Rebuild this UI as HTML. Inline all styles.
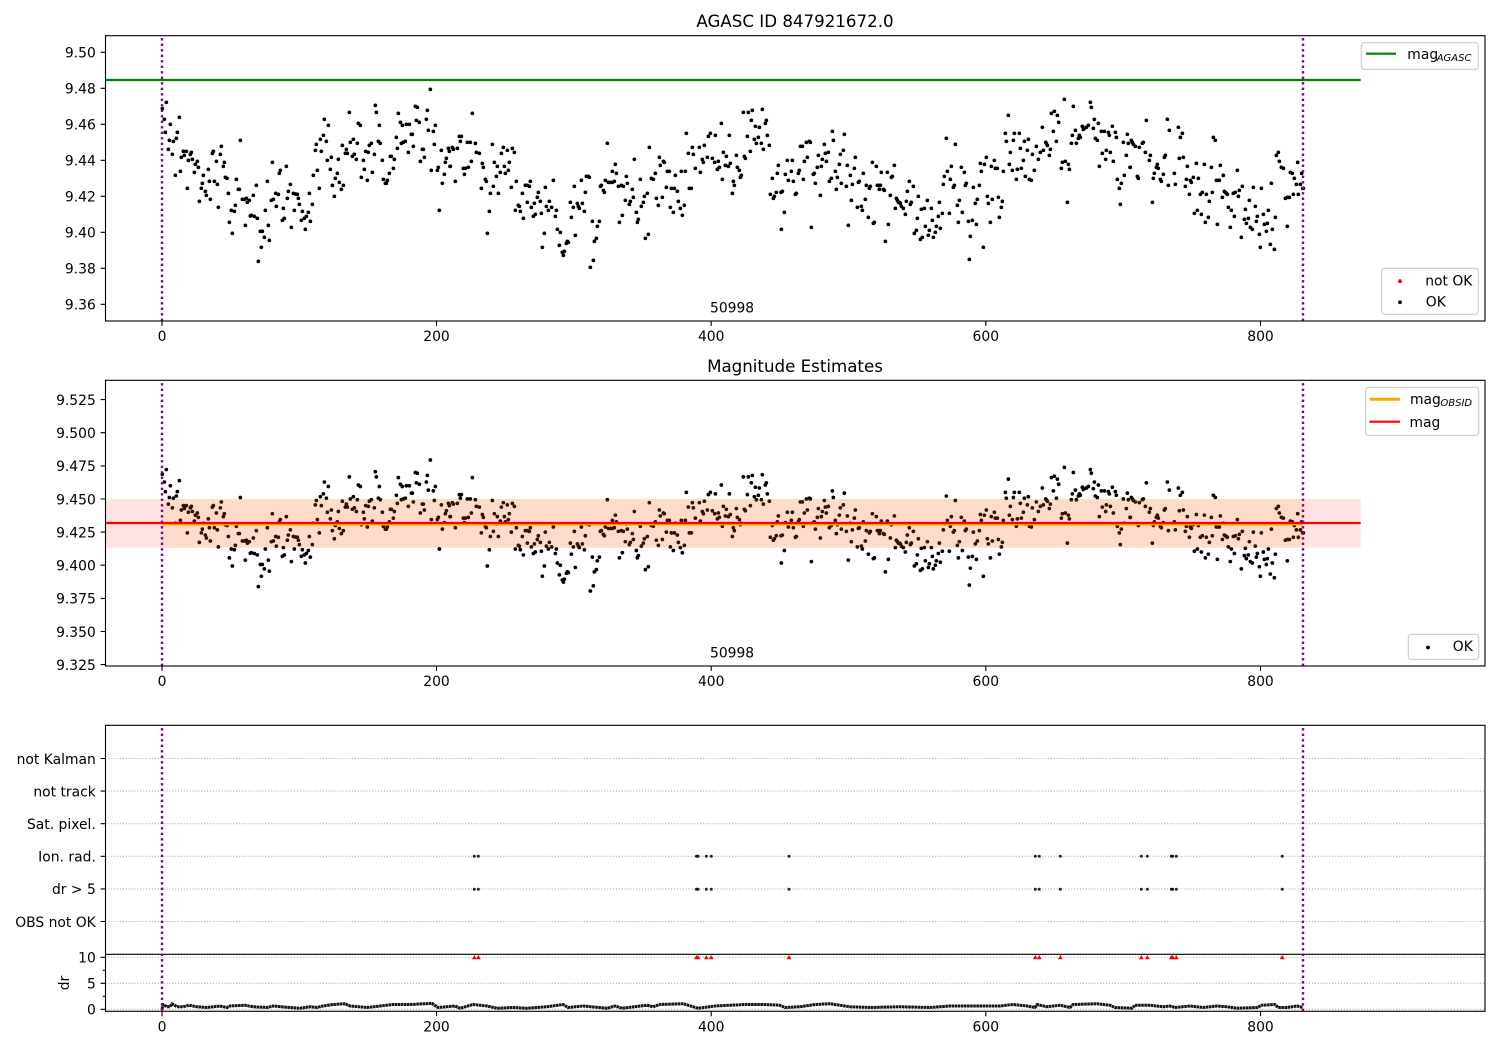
<!DOCTYPE html>
<html><head><meta charset="utf-8"><title>AGASC ID 847921672.0</title>
<style>html,body{margin:0;padding:0;background:#fff}svg{display:block}
text{font-family:"DejaVu Sans","Liberation Sans",sans-serif;font-size:13.89px;fill:#000}
.r{text-anchor:end}.c{text-anchor:middle}
.d{fill:none;stroke:#000;stroke-width:3.7;stroke-linecap:round;vector-effect:non-scaling-stroke}
.s{fill:none;stroke:#000;stroke-width:1.1}
.t{fill:none;stroke:#000;stroke-width:1.1}
.g{fill:none;stroke:#b0b0b0;stroke-width:1.1;stroke-dasharray:1.1 1.8}
.p{fill:none;stroke:#800080;stroke-width:2.4;stroke-dasharray:2.4 3.1}
.l{fill:#fff;fill-opacity:.8;stroke:#ccc;stroke-width:1.1}
</style></head><body>
<svg xmlns="http://www.w3.org/2000/svg" width="1500" height="1050" viewBox="0 0 1500 1050">
<rect width="1500" height="1050" fill="#fff"/>
<defs><g id="pts">
<path class="d" transform="translate(100 30) scale(.33333)" d="M187 236h.1M199 217h.1M193 268h.1M211 283h.1M238 262h.1M196 307h.1M232 307h.1M229 325h.1M208 331h.1M220 334h.1M205 358h.1M217 373h.1M250 364h.1M259 364h.1M274 367h.1M271 373h.1M253 376h.1M244 382h.1M277 388h.1M265 391h.1M292 394h.1M286 403h.1M295 412h.1M226 436h.1M241 424h.1M283 427h.1M262 475h.1M310 436h.1M325 418h.1M307 460h.1M328 454h.1M343 454h.1M352 463h.1M304 475h.1M316 484h.1M319 496h.1M331 508h.1M298 514h.1M355 532h.1M340 364h.1M337 370h.1M364 349h.1M361 373h.1M349 394h.1M373 397h.1M370 409h.1M376 442h.1M381 445h.1M409 448h.1M385 490h.1M415 478h.1M418 478h.1M421 331h.1M469 466h.1M502 454h.1M460 496h.1M427 508h.1M433 508h.1M439 505h.1M448 511h.1M442 517h.1M406 526h.1M394 541h.1M403 544h.1M388 577h.1M397 610h.1M436 586h.1M451 558h.1M454 556h.1M463 559h.1M472 565h.1M496 541h.1M505 586h.1M481 604h.1M487 604h.1M493 622h.1M508 631h.1M484 652h.1M475 694h.1M517 397h.1M541 421h.1M538 430h.1M559 409h.1M571 463h.1M565 484h.1M580 490h.1M586 492h.1M592 493h.1M628 490h.1M514 511h.1M520 508h.1M527 490h.1M535 493h.1M529 529h.1M562 505h.1M595 505h.1M598 523h.1M637 523h.1M550 535h.1M583 541h.1M607 544h.1M625 547h.1M619 559h.1M613 565h.1M604 571h.1M553 565h.1M547 571h.1M574 592h.1M631 574h.1M616 598h.1M640 436h.1M652 421h.1M658 475h.1M649 343h.1M646 361h.1M661 328h.1M670 316h.1M673 268h.1M685 286h.1M679 334h.1M664 364h.1M682 391h.1M694 382h.1M715 388h.1M691 418h.1M712 430h.1M706 445h.1M718 457h.1M697 466h.1M730 466h.1M724 478h.1M703 499h.1M727 346h.1M739 358h.1M736 370h.1M742 370h.1M751 337h.1M760 328h.1M772 340h.1M763 373h.1M757 379h.1M769 388h.1M748 247h.1M775 280h.1M781 286h.1M790 391h.1M793 418h.1M784 442h.1M802 451h.1M817 427h.1M797 364h.1M805 367h.1M808 346h.1M814 340h.1M823 373h.1M826 226h.1M829 247h.1M838 286h.1M835 334h.1M841 340h.1M847 391h.1M850 448h.1M862 451h.1M856 460h.1M859 460h.1M868 430h.1M880 415h.1M871 379h.1M874 379h.1M883 388h.1M892 355h.1M889 322h.1M895 250h.1M901 277h.1M907 286h.1M919 283h.1M928 283h.1M904 340h.1M910 337h.1M916 334h.1M925 367h.1M934 313h.1M937 313h.1M940 349h.1M946 229h.1M952 232h.1M949 271h.1M958 277h.1M961 394h.1M967 358h.1M970 358h.1M973 382h.1M979 268h.1M982 241h.1M985 301h.1M1000 304h.1M1006 286h.1M991 178h.1M1003 343h.1M994 421h.1M1012 421h.1M1015 412h.1M1033 433h.1M1027 460h.1M1018 541h.1M1024 361h.1M1036 397h.1M1039 385h.1M1045 355h.1M1048 364h.1M1050 409h.1"/>
<path class="d" transform="translate(440 30) scale(.33333)" d="M37 352h.1M40 358h.1M52 355h.1M46 454h.1M31 409h.1M58 319h.1M64 319h.1M61 334h.1M70 415h.1M76 415h.1M85 412h.1M73 433h.1M82 337h.1M91 337h.1M106 340h.1M94 394h.1M97 250h.1M109 367h.1M118 370h.1M127 400h.1M130 412h.1M124 475h.1M136 448h.1M139 454h.1M157 343h.1M163 397h.1M172 409h.1M169 439h.1M181 427h.1M184 370h.1M190 352h.1M202 361h.1M217 355h.1M223 367h.1M193 409h.1M196 430h.1M205 421h.1M208 397h.1M160 469h.1M151 490h.1M175 490h.1M148 544h.1M142 610h.1M214 472h.1M229 454h.1M226 541h.1M235 526h.1M238 529h.1M241 544h.1M247 490h.1M250 565h.1M256 466h.1M262 466h.1M268 469h.1M271 454h.1M262 517h.1M274 532h.1M283 520h.1M295 487h.1M292 502h.1M301 514h.1M280 559h.1M286 553h.1M304 550h.1M316 472h.1M319 529h.1M325 541h.1M328 514h.1M335 532h.1M340 451h.1M349 541h.1M346 559h.1M352 598h.1M361 607h.1M358 646h.1M313 610h.1M307 652h.1M367 667h.1M373 664h.1M370 676h.1M379 640h.1M382 634h.1M385 637h.1M391 517h.1M400 532h.1M394 562h.1M403 469h.1M406 616h.1M412 520h.1M415 529h.1M418 535h.1M427 520h.1M424 451h.1M433 544h.1M436 487h.1M439 439h.1M445 439h.1M448 442h.1M457 574h.1M478 574h.1M472 589h.1M469 625h.1M463 634h.1M460 691h.1M451 712h.1M481 469h.1M484 466h.1M490 481h.1M493 487h.1M496 451h.1M502 340h.1M505 457h.1M511 457h.1M517 457h.1M523 454h.1M517 424h.1M526 403h.1M529 430h.1M535 469h.1M544 466h.1M550 469h.1M559 439h.1M562 460h.1M556 511h.1M568 523h.1M571 514h.1M577 478h.1M580 502h.1M583 388h.1M538 577h.1M547 556h.1M589 547h.1M595 568h.1M592 577h.1M601 448h.1M604 529h.1M610 517h.1M613 499h.1M622 490h.1M628 352h.1M616 625h.1M625 613h.1M634 445h.1M640 448h.1M646 430h.1M649 505h.1M655 526h.1M658 382h.1M661 406h.1M667 502h.1M670 394h.1M673 397h.1M679 472h.1M682 424h.1M688 424h.1M691 532h.1M694 475h.1M703 475h.1M700 547h.1M706 436h.1M712 484h.1M715 514h.1M721 535h.1M727 556h.1M733 526h.1M724 424h.1M736 424h.1M739 310h.1M745 370h.1M748 475h.1M754 475h.1M757 352h.1M760 373h.1M766 415h.1M778 352h.1M781 427h.1M787 388h.1M790 397h.1M793 346h.1M802 382h.1M805 319h.1M811 310h.1M817 385h.1M826 316h.1M824 397h.1M835 394h.1M832 418h.1M838 412h.1M844 280h.1M847 448h.1M850 367h.1M856 406h.1M859 379h.1M865 409h.1M868 316h.1M871 400h.1M877 490h.1M880 454h.1M883 466h.1M889 376h.1M892 412h.1M898 421h.1M904 436h.1M901 442h.1M913 379h.1M916 385h.1M910 247h.1M925 247h.1M937 241h.1M934 271h.1M922 319h.1M931 364h.1M943 328h.1M946 289h.1M955 322h.1M958 292h.1M949 340h.1M964 340h.1M967 238h.1M970 358h.1M976 280h.1M979 271h.1M982 316h.1M988 346h.1M991 493h.1M1000 505h.1M1003 499h.1M1009 487h.1M1023 487h.1M1027 484h.1M997 445h.1M1012 430h.1M1015 406h.1M1036 433h.1M1042 391h.1M1045 451h.1M1033 547h.1M1024 598h.1"/>
<path class="d" transform="translate(780 30) scale(.33333)" d="M37 391h.1M34 424h.1M40 454h.1M46 493h.1M49 490h.1M55 430h.1M58 421h.1M61 349h.1M67 349h.1M70 448h.1M73 394h.1M79 337h.1M82 382h.1M88 334h.1M91 337h.1M94 592h.1M100 433h.1M103 430h.1M106 460h.1M112 412h.1M115 376h.1M121 496h.1M124 409h.1M127 388h.1M133 343h.1M136 370h.1M139 394h.1M145 367h.1M148 454h.1M154 445h.1M157 304h.1M160 331h.1M166 424h.1M169 478h.1M172 442h.1M178 403h.1M181 373h.1M184 460h.1M190 361h.1M193 313h.1M199 469h.1M202 406h.1M205 586h.1M211 436h.1M214 511h.1M217 463h.1M223 415h.1M226 382h.1M232 532h.1M235 457h.1M238 454h.1M244 529h.1M247 541h.1M250 430h.1M256 508h.1M259 466h.1M265 562h.1M268 475h.1M271 469h.1M277 397h.1M280 580h.1M283 577h.1M289 409h.1M292 466h.1M298 466h.1M301 466h.1M298 478h.1M304 427h.1M310 478h.1M313 481h.1M316 634h.1M322 427h.1M325 583h.1M331 496h.1M334 442h.1M337 439h.1M343 406h.1M346 535h.1M349 505h.1M352 511h.1M355 517h.1M358 517h.1M361 520h.1M364 529h.1M370 535h.1M376 553h.1M379 514h.1M382 484h.1M388 454h.1M391 523h.1M394 517h.1M400 469h.1M403 610h.1M409 601h.1M412 565h.1M415 499h.1M421 628h.1M427 622h.1M424 538h.1M433 535h.1M436 589h.1M442 511h.1M445 616h.1M448 601h.1M454 535h.1M457 571h.1M460 622h.1M466 607h.1M469 589h.1M475 559h.1M478 517h.1M481 595h.1M487 550h.1M490 463h.1M493 439h.1M499 325h.1M502 424h.1M508 550h.1M511 448h.1M514 409h.1M520 472h.1M523 466h.1M526 343h.1M532 526h.1M535 577h.1M538 511h.1M544 412h.1M547 547h.1M553 427h.1M556 466h.1M559 460h.1M565 574h.1M568 688h.1M571 619h.1M577 571h.1M580 472h.1M586 520h.1M589 583h.1M592 508h.1M598 466h.1M601 400h.1M604 424h.1M610 652h.1M613 403h.1M619 382h.1M622 499h.1M625 520h.1M631 577h.1M634 409h.1M637 508h.1M643 391h.1M646 415h.1M652 415h.1M655 502h.1M658 562h.1M664 532h.1M667 514h.1M670 424h.1M676 310h.1M679 334h.1M685 256h.1M688 403h.1M691 367h.1M697 421h.1M700 331h.1M703 310h.1M709 448h.1M712 418h.1M718 310h.1M721 355h.1M724 415h.1M730 391h.1M733 334h.1M736 439h.1M742 361h.1M745 328h.1M748 448h.1M754 451h.1M757 373h.1M763 421h.1M769 349h.1M775 388h.1M781 367h.1M787 292h.1M790 361h.1M797 337h.1M799 340h.1M802 346h.1M808 376h.1M811 358h.1M814 250h.1M820 304h.1M823 244h.1M829 334h.1M832 256h.1M836 277h.1M844 415h.1M847 397h.1M856 394h.1M853 208h.1M862 517h.1M865 403h.1M868 418h.1M874 340h.1M877 316h.1M880 229h.1M886 301h.1M889 340h.1M895 325h.1M898 316h.1M901 322h.1M907 289h.1M910 298h.1M913 295h.1M919 292h.1M925 286h.1M931 217h.1M934 232h.1M940 295h.1M943 268h.1M946 325h.1M952 331h.1M955 280h.1M958 409h.1M964 304h.1M967 370h.1M973 304h.1M977 388h.1M979 361h.1M985 307h.1M988 316h.1M991 367h.1M997 289h.1M1000 394h.1M1006 307h.1M1009 322h.1M1012 448h.1M1018 475h.1M1021 523h.1M1024 460h.1M1030 337h.1M1033 436h.1M1039 376h.1M1042 313h.1M1045 340h.1M1050 412h.1"/>
<path class="d" transform="translate(1120 30) scale(.33333)" d="M31 412h.1M34 331h.1M37 337h.1M40 343h.1M46 349h.1M52 439h.1M55 445h.1M58 352h.1M67 340h.1M70 337h.1M76 367h.1M79 271h.1M88 391h.1M91 376h.1M97 517h.1M100 445h.1M103 430h.1M109 412h.1M112 403h.1M115 415h.1M121 448h.1M124 454h.1M130 433h.1M133 382h.1M136 376h.1M142 268h.1M145 466h.1M148 301h.1M163 430h.1M166 463h.1M175 292h.1M178 385h.1M181 322h.1M187 310h.1M190 382h.1M196 469h.1M199 448h.1M202 409h.1M208 493h.1M211 451h.1M214 457h.1M220 442h.1M223 550h.1M229 400h.1M232 541h.1M235 445h.1M241 493h.1M244 553h.1M247 487h.1M253 403h.1M256 577h.1M259 493h.1M265 562h.1M268 514h.1M274 412h.1M277 487h.1M280 322h.1M286 331h.1M289 451h.1M292 583h.1M295 451h.1M298 451h.1M301 406h.1M307 502h.1M310 436h.1M313 484h.1M316 487h.1M319 490h.1M322 493h.1M325 532h.1M331 592h.1M334 541h.1M340 490h.1M343 559h.1M346 487h.1M352 421h.1M355 499h.1M358 481h.1M364 622h.1M367 469h.1M373 568h.1M376 538h.1M379 580h.1M385 565h.1M388 511h.1M391 592h.1M397 598h.1M400 472h.1M406 529h.1M409 574h.1M412 559h.1M418 613h.1M421 652h.1M424 475h.1M430 553h.1M433 583h.1M439 604h.1M442 580h.1M445 541h.1M451 643h.1M454 460h.1M457 598h.1M463 658h.1M466 562h.1M469 376h.1M475 367h.1M478 394h.1M484 412h.1M490 415h.1M496 505h.1M502 502h.1M502 589h.1M508 502h.1M511 427h.1M517 430h.1M520 493h.1M523 445h.1M529 463h.1M533 397h.1M535 493h.1M541 463h.1M545 430h.1M548 475h.1M550 475h.1"/>
</g></defs>

<!-- Panel 1 -->
<text class="c" x="795" y="27" style="font-size:16.67px">AGASC ID 847921672.0</text>
<use href="#pts"/>
<path d="M105.5 80H1360.7" stroke="#008000" stroke-width="2.2" fill="none"/>
<path class="p" d="M162 321V36M1303 321V36"/>
<rect class="s" x="105.5" y="35.7" width="1379.5" height="285.3"/>
<path class="t" d="M100.6 52.3h4.9M100.6 88.3h4.9M100.6 124.3h4.9M100.6 160.3h4.9M100.6 196.3h4.9M100.6 232.3h4.9M100.6 268.3h4.9M100.6 304.3h4.9M162 321v4.9M436.5 321v4.9M711.2 321v4.9M985.8 321v4.9M1260.5 321v4.9"/>
<text class="r" x="95.8" y="57.6">9.50</text><text class="r" x="95.8" y="93.6">9.48</text><text class="r" x="95.8" y="129.6">9.46</text><text class="r" x="95.8" y="165.6">9.44</text><text class="r" x="95.8" y="201.6">9.42</text><text class="r" x="95.8" y="237.6">9.40</text><text class="r" x="95.8" y="273.6">9.38</text><text class="r" x="95.8" y="309.6">9.36</text>
<text class="c" x="162" y="341">0</text><text class="c" x="436.5" y="341">200</text><text class="c" x="711.2" y="341">400</text><text class="c" x="985.8" y="341">600</text><text class="c" x="1260.5" y="341">800</text>
<text x="710" y="312.4">50998</text>
<rect class="l" x="1361.3" y="42.7" width="117" height="26.6" rx="2.8"/>
<path d="M1366 53.7h30" stroke="#008000" stroke-width="2.2"/>
<text x="1407.3" y="59">mag</text><text x="1436.7" y="60.8" style="font-size:10px;font-style:italic">AGASC</text>
<rect class="l" x="1381.7" y="268.3" width="96.6" height="46" rx="2.8"/>
<circle cx="1400" cy="281.2" r="1.9" fill="#f00"/><circle cx="1400" cy="302.3" r="1.9" fill="#000"/>
<text x="1425.2" y="285.4">not OK</text><text x="1425.8" y="306.4">OK</text>

<!-- Panel 2 -->
<text class="c" x="795" y="372" style="font-size:16.67px">Magnitude Estimates</text>
<use href="#pts" transform="translate(0 394.23) scale(1 .736)"/>
<rect x="105.5" y="499" width="1255.2" height="48.7" fill="#f00" fill-opacity=".11"/>
<rect x="162" y="499" width="1141" height="48.7" fill="#ffa500" fill-opacity=".11"/>
<path d="M162 524.2H1303" stroke="#ffa500" stroke-width="2.6"/>
<path d="M105.5 523H1360.7" stroke="#f00" stroke-width="2.2"/>
<path class="p" d="M162 666V380M1303 666V380"/>
<rect class="s" x="105.5" y="380.3" width="1379.5" height="285.7"/>
<path class="t" d="M100.6 399.6h4.9M100.6 432.7h4.9M100.6 465.9h4.9M100.6 499h4.9M100.6 532.1h4.9M100.6 565.2h4.9M100.6 598.4h4.9M100.6 631.5h4.9M100.6 664.6h4.9M162 666v4.9M436.5 666v4.9M711.2 666v4.9M985.8 666v4.9M1260.5 666v4.9"/>
<text class="r" x="95.8" y="404.9">9.525</text><text class="r" x="95.8" y="438">9.500</text><text class="r" x="95.8" y="471.2">9.475</text><text class="r" x="95.8" y="504.3">9.450</text><text class="r" x="95.8" y="537.4">9.425</text><text class="r" x="95.8" y="570.5">9.400</text><text class="r" x="95.8" y="603.7">9.375</text><text class="r" x="95.8" y="636.8">9.350</text><text class="r" x="95.8" y="669.9">9.325</text>
<text class="c" x="162" y="686">0</text><text class="c" x="436.5" y="686">200</text><text class="c" x="711.2" y="686">400</text><text class="c" x="985.8" y="686">600</text><text class="c" x="1260.5" y="686">800</text>
<text x="710" y="657.4">50998</text>
<rect class="l" x="1365.7" y="387.3" width="113" height="48" rx="2.8"/>
<path d="M1369.5 399.3h30.5" stroke="#ffa500" stroke-width="3"/><path d="M1369.5 421.7h30.5" stroke="#f00" stroke-width="2.2"/>
<text x="1410" y="404">mag</text><text x="1440.4" y="405.8" style="font-size:10px;font-style:italic">OBSID</text><text x="1409.5" y="426.8">mag</text>
<rect class="l" x="1408.3" y="634.3" width="70.4" height="25" rx="2.8"/>
<circle cx="1428" cy="647.5" r="1.9" fill="#000"/>
<text x="1452.8" y="651.2">OK</text>

<!-- Panel 3 -->
<path class="g" d="M105.5 758.5H1485M105.5 791.1H1485M105.5 823.7H1485M105.5 856.3H1485M105.5 888.9H1485M105.5 921.5H1485M105.5 957.3H1485M105.5 983.3H1485M105.5 1009.3H1485"/>
<g fill="#000" fill-opacity=".85">
<circle cx="474.3" cy="856.3" r="1.5"/><circle cx="478.3" cy="856.3" r="1.5"/><circle cx="696.5" cy="856.3" r="1.5"/><circle cx="698" cy="856.3" r="1.5"/><circle cx="706.3" cy="856.3" r="1.5"/><circle cx="711.3" cy="856.3" r="1.5"/><circle cx="789" cy="856.3" r="1.5"/><circle cx="1035.3" cy="856.3" r="1.5"/><circle cx="1039.3" cy="856.3" r="1.5"/><circle cx="1060.3" cy="856.3" r="1.5"/><circle cx="1141.3" cy="856.3" r="1.5"/><circle cx="1147.3" cy="856.3" r="1.5"/><circle cx="1171.3" cy="856.3" r="1.5"/><circle cx="1172.7" cy="856.3" r="1.5"/><circle cx="1176.3" cy="856.3" r="1.5"/><circle cx="1282.3" cy="856.3" r="1.5"/>
<circle cx="474.3" cy="889.3" r="1.5"/><circle cx="478.3" cy="889.3" r="1.5"/><circle cx="696.5" cy="889.3" r="1.5"/><circle cx="698" cy="889.3" r="1.5"/><circle cx="706.3" cy="889.3" r="1.5"/><circle cx="711.3" cy="889.3" r="1.5"/><circle cx="789" cy="889.3" r="1.5"/><circle cx="1035.3" cy="889.3" r="1.5"/><circle cx="1039.3" cy="889.3" r="1.5"/><circle cx="1060.3" cy="889.3" r="1.5"/><circle cx="1141.3" cy="889.3" r="1.5"/><circle cx="1147.3" cy="889.3" r="1.5"/><circle cx="1171.3" cy="889.3" r="1.5"/><circle cx="1172.7" cy="889.3" r="1.5"/><circle cx="1176.3" cy="889.3" r="1.5"/><circle cx="1282.3" cy="889.3" r="1.5"/>
</g>
<path fill="#f00" d="M474.3 955l2.4 4.3h-4.8zM478.3 955l2.4 4.3h-4.8zM696.5 955l2.4 4.3h-4.8zM698 955l2.4 4.3h-4.8zM706.3 955l2.4 4.3h-4.8zM711.3 955l2.4 4.3h-4.8zM789 955l2.4 4.3h-4.8zM1035.3 955l2.4 4.3h-4.8zM1039.3 955l2.4 4.3h-4.8zM1060.3 955l2.4 4.3h-4.8zM1141.3 955l2.4 4.3h-4.8zM1147.3 955l2.4 4.3h-4.8zM1171.3 955l2.4 4.3h-4.8zM1172.7 955l2.4 4.3h-4.8zM1176.3 955l2.4 4.3h-4.8zM1282.3 955l2.4 4.3h-4.8z"/>
<polyline transform="translate(0 251.5) scale(1 .75)" fill="none" stroke="#111" stroke-width="3" stroke-dasharray="2.6 .5" vector-effect="non-scaling-stroke" stroke-linejoin="round" points="162,1010 163,1004 167,1007 170,1007 172,1003 177,1007 183,1007 189,1005 197,1007 207,1008 220,1006 227,1008 230,1006 245,1005 253,1007 267,1008 273,1006 290,1008 300,1009 310,1007 317,1008 323,1006 333,1004 345,1003 350,1006 367,1008 380,1006 393,1004 410,1004 432,1002.5 438,1008 455,1006 460,1009 473,1004 487,1006 497,1009 513,1008 527,1009 547,1007 563,1004 568,1008 583,1006 607,1009 615,1006 622,1009 647,1005 653,1007 660,1004 683,1003 693,1007 698,1009 715,1006 730,1005 745,1004 765,1004 780,1005 785,1008 800,1007 815,1004 830,1003 850,1007 870,1008 900,1007 930,1008 950,1006 975,1006 1000,1006 1013,1004 1027,1006 1035,1008 1037,1004 1047,1007 1060,1005 1070,1008 1073,1004 1097,1003 1110,1005 1115,1008 1132,1009 1135,1005 1150,1005 1163,1007 1170,1006 1175,1008 1190,1006 1203,1008 1217,1006 1227,1007 1237,1009 1257,1008 1262,1005 1275,1004 1278,1008 1287,1008 1297,1006 1303,1008"/>
<path class="s" d="M105.5 954.3H1485"/>
<rect class="s" x="105.5" y="725.3" width="1379.5" height="286"/>
<path class="p" d="M162 1011V725M1303 1011V725"/>
<path class="t" d="M100.6 758.5h4.9M100.6 791.1h4.9M100.6 823.7h4.9M100.6 856.3h4.9M100.6 888.9h4.9M100.6 921.5h4.9M100.6 957.3h4.9M100.6 983.3h4.9M100.6 1009.3h4.9M102.7 970.3h2.8M102.7 996.3h2.8M162 1011.3v4.9M436.5 1011.3v4.9M711.2 1011.3v4.9M985.8 1011.3v4.9M1260.5 1011.3v4.9"/>
<text class="r" x="95.8" y="763.8">not Kalman</text><text class="r" x="95.8" y="796.4">not track</text><text class="r" x="95.8" y="829">Sat. pixel.</text><text class="r" x="95.8" y="861.6">Ion. rad.</text><text class="r" x="95.8" y="894.2">dr &gt; 5</text><text class="r" x="95.8" y="926.8">OBS not OK</text>
<text class="r" x="95.8" y="962.6">10</text><text class="r" x="95.8" y="988.6">5</text><text class="r" x="95.8" y="1014.6">0</text>
<text class="c" transform="translate(69 983) rotate(-90)">dr</text>
<text class="c" x="162" y="1031.7">0</text><text class="c" x="436.5" y="1031.7">200</text><text class="c" x="711.2" y="1031.7">400</text><text class="c" x="985.8" y="1031.7">600</text><text class="c" x="1260.5" y="1031.7">800</text>
</svg>
</body></html>
